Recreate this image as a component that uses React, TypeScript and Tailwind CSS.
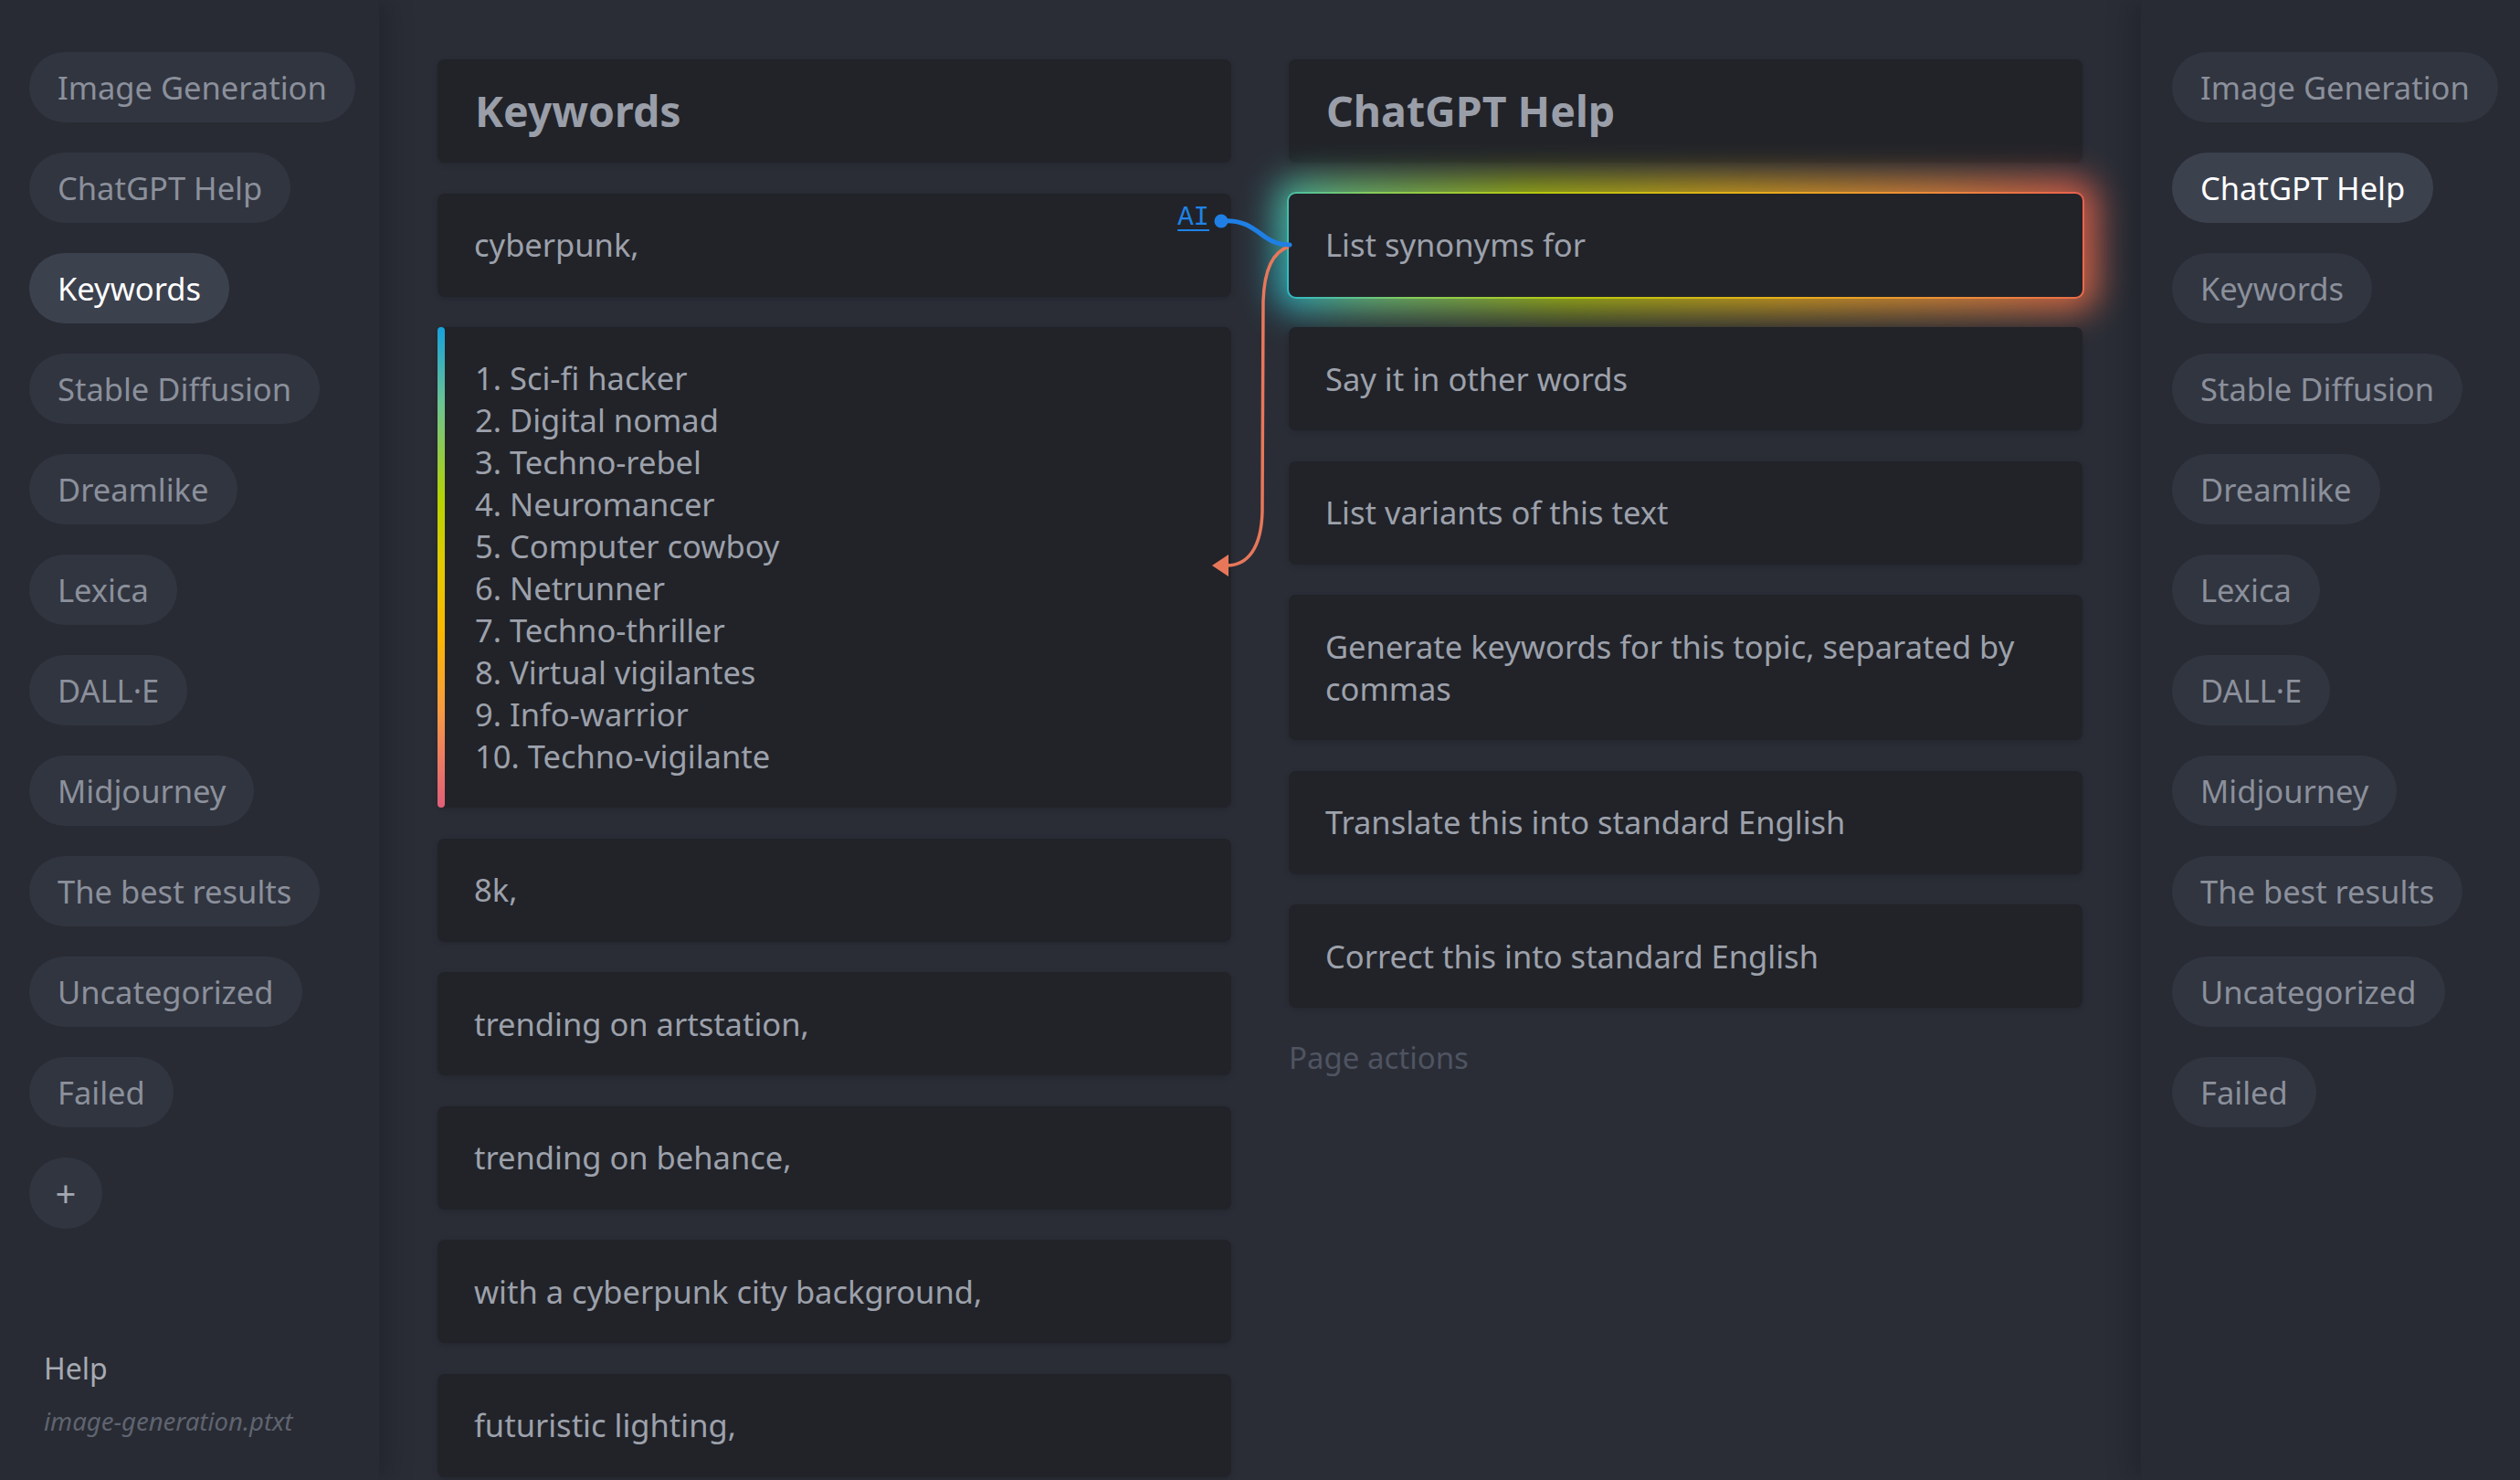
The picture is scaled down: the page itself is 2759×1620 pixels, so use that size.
import clsx from 'clsx';

const categories = [
  'Image Generation',
  'ChatGPT Help',
  'Keywords',
  'Stable Diffusion',
  'Dreamlike',
  'Lexica',
  'DALL·E',
  'Midjourney',
  'The best results',
  'Uncategorized',
  'Failed',
];

const synonyms = [
  'Sci-fi hacker',
  'Digital nomad',
  'Techno-rebel',
  'Neuromancer',
  'Computer cowboy',
  'Netrunner',
  'Techno-thriller',
  'Virtual vigilantes',
  'Info-warrior',
  'Techno-vigilante',
];

const keywordCards = [
  '8k,',
  'trending on artstation,',
  'trending on behance,',
  'with a cyberpunk city background,',
  'futuristic lighting,',
];

const helpCards = [
  'Say it in other words',
  'List variants of this text',
  'Generate keywords for this topic, separated by commas',
  'Translate this into standard English',
  'Correct this into standard English',
];

function Pill({ label, active }: { label: string; active?: boolean }) {
  return (
    <div
      className={clsx(
        'flex h-[77px] w-fit items-center whitespace-nowrap rounded-full px-[31px] text-[34.5px] leading-[46px]',
        active ? 'bg-[#3c414e] text-white' : 'bg-[#313540] text-[#8b909b]'
      )}
    >
      {label}
    </div>
  );
}

function Sidebar({ active, side }: { active: string; side: 'left' | 'right' }) {
  return (
    <aside
      className={clsx(
        'relative z-10 flex h-full w-[415px] shrink-0 flex-col bg-[#282b33] px-[32px] pt-[57px]',
        side === 'left'
          ? 'shadow-[10px_0_28px_rgba(0,0,0,0.18)]'
          : 'pl-[34px] shadow-[-10px_0_28px_rgba(0,0,0,0.18)]'
      )}
    >
      <div className="flex flex-col gap-[33px]">
        {categories.map((c) => (
          <Pill key={c} label={c} active={c === active} />
        ))}
        {side === 'left' && (
          <div className="flex h-[78px] w-[80px] items-center justify-center rounded-full bg-[#313540] text-[40px] leading-none text-[#a3a7b0]">
            +
          </div>
        )}
      </div>
      {side === 'left' && (
        <div className="mt-auto flex flex-col gap-[20px] pb-[46px] pl-[16px]">
          <div className="text-[32px] leading-[40px] text-[#a6aab3]">Help</div>
          <div className="text-[27.5px] italic leading-[36px] text-[#5f6470]">image-generation.ptxt</div>
        </div>
      )}
    </aside>
  );
}

function Header({ title }: { title: string }) {
  return (
    <div className="flex h-[113px] items-center rounded-lg bg-[#212329] px-[41px] text-[46.5px] font-bold text-[#9a9ea8] shadow-[0_2px_6px_rgba(0,0,0,0.15)]">
      {title}
    </div>
  );
}

function Card({ children, className }: { children: React.ReactNode; className?: string }) {
  return (
    <div
      className={clsx(
        'relative rounded-lg bg-[#212329] px-[40px] py-[33.5px] text-[34.5px] leading-[46px] text-[#9da1ab] shadow-[0_2px_6px_rgba(0,0,0,0.15)]',
        className
      )}
    >
      {children}
    </div>
  );
}

export default function App() {
  return (
    <div className="relative flex h-[1620px] w-full overflow-hidden bg-[#2a2d36] font-['Noto_Sans','Open_Sans',sans-serif]">
      <Sidebar active="Keywords" side="left" />

      <main className="grid flex-1 grid-cols-2 items-start gap-x-[63px] px-[64px] pt-[65px]">
        <section className="flex flex-col gap-[33.5px]">
          <Header title="Keywords" />
          <Card>
            cyberpunk,
            <span className="absolute right-[24px] top-[10px] font-['Liberation_Mono',monospace] text-[29px] leading-[34px] text-[#1f83e6] underline underline-offset-[5px]">
              AI
            </span>
          </Card>
          <div className="flex rounded-lg bg-[#212329] shadow-[0_2px_6px_rgba(0,0,0,0.15)]">
            <div className="w-[8px] shrink-0 rounded-full bg-[linear-gradient(to_bottom,#16a2dc_0%,#6cc492_16%,#b6d300_36%,#e4c900_50%,#fbb700_64%,#f79a42_80%,#ec7b62_90%,#e05f78_100%)]" />
            <ol className="py-[33px] pl-[33px] text-[34.5px] leading-[46px] text-[#9da1ab]">
              {synonyms.map((s, i) => (
                <li key={s}>
                  {i + 1}. {s}
                </li>
              ))}
            </ol>
          </div>
          {keywordCards.map((k) => (
            <Card key={k}>{k}</Card>
          ))}
        </section>

        <section className="flex flex-col gap-[33.5px]">
          <Header title="ChatGPT Help" />
          <div className="relative">
            <div className="absolute -inset-[16px] rounded-3xl bg-[linear-gradient(70deg,#1fb2d6_0%,#6ec97e_12%,#b0c70c_34%,#e6ad18_58%,#ee8c3a_80%,#e65d4e_100%)] opacity-85 blur-[18px]" />
            <div className="absolute -inset-[2px] rounded-[10px] bg-[linear-gradient(70deg,#2fb8c8_0%,#86cc5a_15%,#b8c80c_35%,#e8ae1a_60%,#ee8a3a_82%,#e8604e_100%)]" />
            <Card className="shadow-none">List synonyms for</Card>
          </div>
          {helpCards.map((h) => (
            <Card key={h}>{h}</Card>
          ))}
          <div className="-mt-[2px] text-[33px] leading-[46px] text-[#4f5461]">Page actions</div>
        </section>
      </main>

      <Sidebar active="ChatGPT Help" side="right" />

      <svg
        className="pointer-events-none absolute left-0 top-0 z-20"
        width="2759"
        height="1620"
        viewBox="0 0 2759 1620"
      >
        <path
          d="M1411 270 C1392 276 1384 298 1383 330 L1382 560 C1381 600 1366 619 1343 619"
          fill="none"
          stroke="#e8775a"
          strokeWidth="3.5"
        />
        <polygon points="1327,619 1345,607 1345,631" fill="#e8775a" />
        <path
          d="M1337 242 C1362 240 1372 250 1386 260 C1396 267 1404 268 1412 268"
          fill="none"
          stroke="#1f7fe5"
          strokeWidth="5"
          strokeLinecap="round"
        />
        <circle cx="1337" cy="242" r="7.5" fill="#1f7fe5" />
      </svg>
    </div>
  );
}
